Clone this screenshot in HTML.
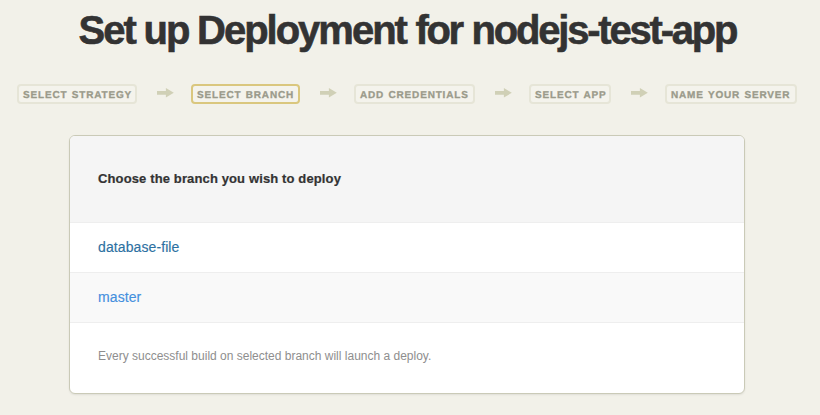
<!DOCTYPE html>
<html><head><meta charset="utf-8">
<style>
*{box-sizing:border-box;margin:0;padding:0}
html,body{width:820px;height:415px;overflow:hidden;background:#f2f1e9;font-family:"Liberation Sans",sans-serif;}
h1{position:absolute;left:0;top:0;width:820px;height:60px;font-size:40px;font-weight:bold;color:#333;line-height:46px;white-space:nowrap;-webkit-text-stroke:0.6px #333}
h1 span{position:absolute;top:6.5px;letter-spacing:-2px}
.steps{position:absolute;top:84px;left:0;width:820px;height:20px}
.step{position:absolute;top:0;height:20px;border:2px solid #e6e5d7;border-radius:4px;background:#f4f3ec;font-size:10px;font-weight:bold;color:#9a9a8a;line-height:16px;padding-left:4px;white-space:nowrap}
.step b{display:block;font-size:10px;text-rendering:geometricPrecision;letter-spacing:0.82px;word-spacing:0.8px;-webkit-text-stroke:0.3px #9a9a8a;position:relative;top:2px}
.step.active{border-color:#dac77e}
.arrow{position:absolute;top:4.2px;width:16.8px;height:9.6px}
.card{position:absolute;left:69px;top:135px;width:676px;height:259px;background:#fff;border:1px solid #cacab7;border-radius:6px;box-shadow:0 1px 2px rgba(0,0,0,0.08);overflow:hidden}
.head{height:87px;background:#f5f5f5;border-bottom:1px solid #eeeeee;padding:35px 28px 0;font-size:13px;font-weight:bold;color:#333;letter-spacing:0.13px;-webkit-text-stroke:0.2px #333;white-space:nowrap}
.row{height:50px;border-bottom:1px solid #eeeeee;padding:16px 28px 0;font-size:14px;color:#2d71a2;letter-spacing:0.1px;-webkit-text-stroke:0.15px #2d71a2}
.row.alt{background:#f9f9f9;color:#4590de;-webkit-text-stroke:0.15px #4590de}
.foot{padding:26px 28px 0;font-size:12px;color:#8e8e8e;white-space:nowrap}
</style></head><body>
<h1><span id="w1" style="left:78.5px">Set</span><span id="w2" style="left:143.5px">up</span><span id="w3" style="left:197px">Deployment</span><span id="w4" style="left:415.5px;letter-spacing:-2.4px">for</span><span id="w5" style="left:471.5px;letter-spacing:-2.2px">nodejs-test-app</span></h1>
<div class="steps">
<div class="step" style="left:17px;width:120px"><b>SELECT STRATEGY</b></div>
<svg class="arrow" style="left:157px" viewBox="0 0 17 10" preserveAspectRatio="none"><path d="M0 3h9V0l8 5L9 10V7H0z" fill="#d0d0b6"/></svg>
<div class="step active" style="left:191px;width:109px"><b>SELECT BRANCH</b></div>
<svg class="arrow" style="left:320px" viewBox="0 0 17 10" preserveAspectRatio="none"><path d="M0 3h9V0l8 5L9 10V7H0z" fill="#d0d0b6"/></svg>
<div class="step" style="left:354px;width:121px"><b>ADD CREDENTIALS</b></div>
<svg class="arrow" style="left:495px" viewBox="0 0 17 10" preserveAspectRatio="none"><path d="M0 3h9V0l8 5L9 10V7H0z" fill="#d0d0b6"/></svg>
<div class="step" style="left:529px;width:82px"><b>SELECT APP</b></div>
<svg class="arrow" style="left:631px" viewBox="0 0 17 10" preserveAspectRatio="none"><path d="M0 3h9V0l8 5L9 10V7H0z" fill="#d0d0b6"/></svg>
<div class="step" style="left:665px;width:132px"><b>NAME YOUR SERVER</b></div>
</div>
<div class="card">
<div class="head">Choose the branch you wish to deploy</div>
<div class="row">database-file</div>
<div class="row alt">master</div>
<div class="foot">Every successful build on selected branch will launch a deploy.</div>
</div>
</body></html>
